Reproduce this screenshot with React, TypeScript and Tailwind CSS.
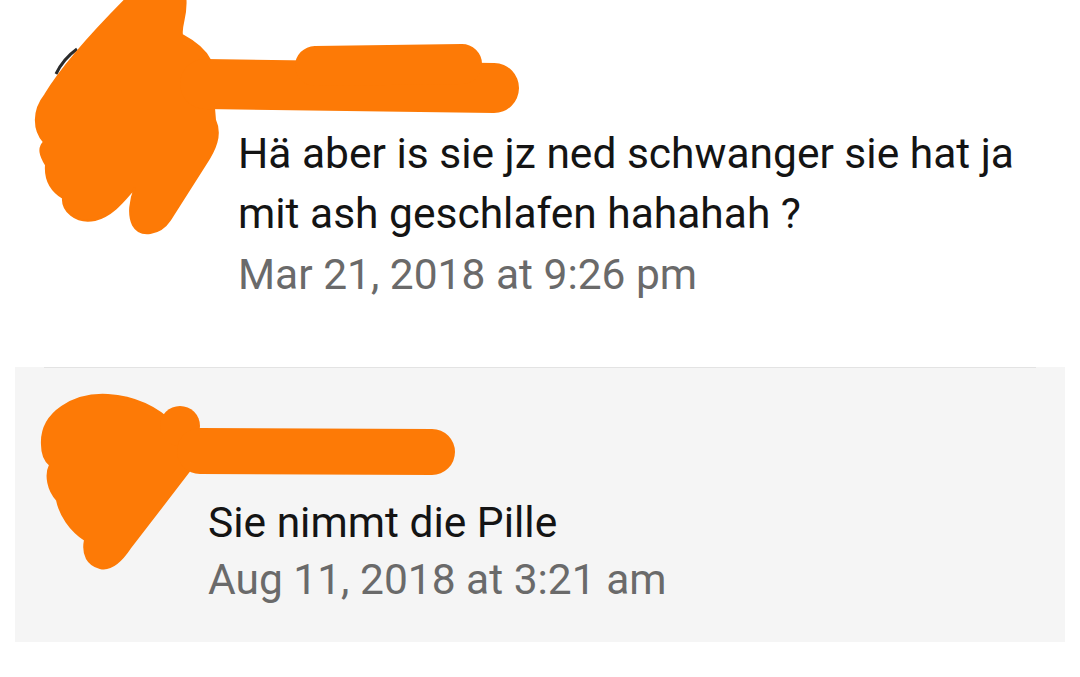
import React from "react";

const ORANGE = "#fd7a06";

const Scribbles = () => {
  return (
    <svg
      className="absolute left-0 top-0 pointer-events-none"
      width={1080}
      height={677}
      viewBox="0 0 1080 677"
    >
      {/* bits of avatar peeking out */}
      <path d="M56 74 Q63 59 77 49" stroke="#2a2a2a" strokeWidth={3} fill="none" />
      <circle cx={134} cy={186} r={3} fill="#2a2a2a" />

      {/* first comment */}
      <g fill={ORANGE} stroke={ORANGE} strokeLinecap="round" strokeLinejoin="round">
        <path
          strokeWidth={2}
          d="M130 -5 L185 -5 C188 15 180 25 182 35 C195 42 205 50 210 60 L215 120 C222 135 215 150 205 165 L170 220 C160 235 140 238 133 225 C128 215 130 200 135 188 C128 195 115 215 95 220 C75 224 62 210 63 198 C50 190 45 178 46 165 C40 155 38 148 44 142 C33 130 33 110 45 95 C60 70 90 35 130 -5 Z"
        />
        <line x1={205} y1={84} x2={494} y2={88} strokeWidth={50} />
        <line x1={315} y1={66} x2={462} y2={64} strokeWidth={40} />
      </g>

      {/* second comment */}
      <g fill={ORANGE} stroke={ORANGE} strokeLinecap="round" strokeLinejoin="round">
        <path
          strokeWidth={2}
          d="M42 445 C40 412 75 393 108 395 C140 397 160 410 175 425 L190 470 L130 548 C118 566 108 570 100 568 C88 565 82 555 85 540 C70 530 60 515 57 500 C48 490 45 475 50 465 C44 460 42 452 42 445 Z"
        />
        <circle cx={180} cy={426} r={20} strokeWidth={0} />
        <line x1={200} y1={451} x2={432} y2={452} strokeWidth={46} />
      </g>
    </svg>
  );
};

export default function App() {
  return (
    <div
      className="relative w-[1080px] h-[677px] overflow-hidden bg-white"
      style={{ fontFamily: "Roboto, 'Noto Sans', sans-serif" }}
    >
      {/* comment 1 */}
      <div className="flex pl-[238px] pt-[124px]">
        <div className="flex flex-col">
          <p className="text-[42.5px] leading-[60px] text-[#141414]">
            Hä aber is sie jz ned schwanger sie hat ja
            <br />
            mit ash geschlafen hahahah ?
          </p>
          <span className="text-[42.5px] leading-[62px] text-[#6a6a6a]">Mar 21, 2018 at 9:26 pm</span>
        </div>
      </div>

      {/* comment 2 (highlighted) */}
      <div className="mx-[15px] mt-[61px] bg-[#f5f5f5]">
        <div className="mx-[29px] h-px bg-[#e3e3e3]" />
        <div className="flex pl-[193px] pt-[126px] pb-[34px]">
          <div className="flex flex-col">
            <p className="text-[42.5px] leading-[57px] text-[#141414]">Sie nimmt die Pille</p>
            <span className="text-[42.5px] leading-[57px] text-[#6a6a6a]">Aug 11, 2018 at 3:21 am</span>
          </div>
        </div>
      </div>

      <Scribbles />
    </div>
  );
}
